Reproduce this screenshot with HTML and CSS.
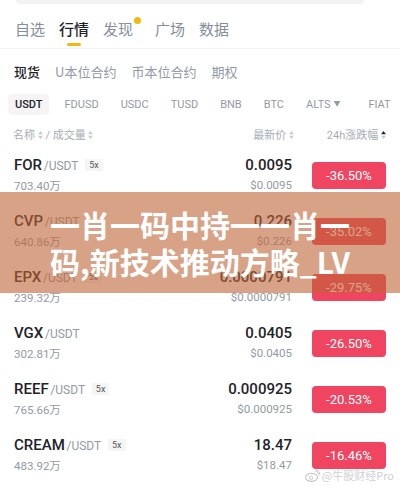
FILE: index.html
```html
<!DOCTYPE html>
<html lang="zh-CN">
<head>
    <meta charset="UTF-8">
    <meta name="viewport" content="width=device-width, initial-scale=1.0">
    <title>行情</title>
    <link rel="stylesheet" href="styles.css">
</head>
<body>
    <div class="page">
        <div class="search"></div>

        <div class="tabs">
            <span class="tab">自选</span>
            <span class="tab active">行情</span>
            <span class="tab dot">发现</span>
            <span class="tab">广场</span>
            <span class="tab">数据</span>
        </div>

        <div class="subtabs">
            <span class="subtab active">现货</span>
            <span class="subtab">U本位合约</span>
            <span class="subtab">币本位合约</span>
            <span class="subtab">期权</span>
        </div>

        <div class="quotes">
            <span class="quote active">USDT</span>
            <span class="quote">FDUSD</span>
            <span class="quote">USDC</span>
            <span class="quote">TUSD</span>
            <span class="quote">BNB</span>
            <span class="quote">BTC</span>
            <span class="quote">ALTS <i class="caret">&#9660;</i></span>
            <span class="quote">FIAT</span>
        </div>

        <div class="head">
            <div class="head-name">名称 <svg class="sort" viewBox="0 0 6 10"><path d="M3 0L6 4H0z"/><path d="M3 10L0 6h6z"/></svg> / 成交量 <svg class="sort" viewBox="0 0 6 10"><path d="M3 0L6 4H0z"/><path d="M3 10L0 6h6z"/></svg></div>
            <div class="head-price">最新价 <svg class="sort" viewBox="0 0 6 10"><path d="M3 0L6 4H0z"/><path d="M3 10L0 6h6z"/></svg></div>
            <div class="head-change">24h涨跌幅 <svg class="sort on" viewBox="0 0 6 10"><path class="up" d="M3 0L6 4H0z"/><path d="M3 10L0 6h6z"/></svg></div>
        </div>

        <div class="list">
            <div class="row">
                <div class="pair">
                    <div class="sym">FOR <span class="quote-sym">/USDT</span> <span class="lev">5x</span></div>
                    <div class="vol">703.40万</div>
                </div>
                <div class="price">
                    <div class="last">0.0095</div>
                    <div class="usd">$0.0095</div>
                </div>
                <div class="change">-36.50%</div>
            </div>
            <div class="row">
                <div class="pair">
                    <div class="sym">CVP <span class="quote-sym">/USDT</span></div>
                    <div class="vol">640.86万</div>
                </div>
                <div class="price">
                    <div class="last">0.226</div>
                    <div class="usd">$0.226</div>
                </div>
                <div class="change">-35.02%</div>
            </div>
            <div class="row">
                <div class="pair">
                    <div class="sym">EPX <span class="quote-sym">/USDT</span> <span class="lev">5x</span></div>
                    <div class="vol">239.32万</div>
                </div>
                <div class="price">
                    <div class="last">0.0000791</div>
                    <div class="usd">$0.0000791</div>
                </div>
                <div class="change">-29.75%</div>
            </div>
            <div class="row">
                <div class="pair">
                    <div class="sym">VGX <span class="quote-sym">/USDT</span></div>
                    <div class="vol">302.81万</div>
                </div>
                <div class="price">
                    <div class="last">0.0405</div>
                    <div class="usd">$0.0405</div>
                </div>
                <div class="change">-26.50%</div>
            </div>
            <div class="row">
                <div class="pair">
                    <div class="sym">REEF <span class="quote-sym">/USDT</span> <span class="lev">5x</span></div>
                    <div class="vol">765.66万</div>
                </div>
                <div class="price">
                    <div class="last">0.000925</div>
                    <div class="usd">$0.000925</div>
                </div>
                <div class="change">-20.53%</div>
            </div>
            <div class="row">
                <div class="pair">
                    <div class="sym">CREAM <span class="quote-sym">/USDT</span> <span class="lev">5x</span></div>
                    <div class="vol">483.92万</div>
                </div>
                <div class="price">
                    <div class="last">18.47</div>
                    <div class="usd">$18.47</div>
                </div>
                <div class="change">-16.46%</div>
            </div>
        </div>

        <div class="banner">
            <p>一肖一码中持一一肖一</p>
            <p>码,新技术推动方略_LV</p>
        </div>

        <div class="mark">
            <svg class="weibo" viewBox="0 0 16 14"><ellipse cx="7" cy="9" rx="6.5" ry="4.3" fill="none" stroke="#c8c8c8" stroke-width="1.2"/><circle cx="6.5" cy="9.5" r="1.8" fill="none" stroke="#c8c8c8" stroke-width="1"/><path d="M11 2.5a3 3 0 0 1 3.5 3.5M11 0.8a4.8 4.8 0 0 1 4.6 5.4" fill="none" stroke="#c8c8c8" stroke-width="1"/></svg>
            <span>@牛股财经Pro</span>
        </div>
    </div>
</body>
</html>
```

FILE: styles.css
```css
body {
    margin: 0;
    padding: 0;
    background: #fff;
    font-family: Roboto, "Noto Sans CJK SC", sans-serif;
    color: #1e2329;
}
.page {
    position: relative;
    width: 400px;
    height: 486px;
    overflow: hidden;
}
.search {
    height: 4px;
    margin: 0 36px 0 16px;
    background-color: #f3f3f3;
    border-radius: 0 0 8px 8px;
}
.tabs {
    display: flex;
    gap: 14px;
    padding: 15px 0 9px 15px;
    border-bottom: 1px solid #f2f2f2;
}
.tab {
    position: relative;
    font-size: 15px;
    line-height: 20px;
    color: #848e9c;
    font-family: "Noto Sans CJK SC", sans-serif;
}
.tab.active {
    color: #1e2329;
    font-weight: 500;
}
.tab.active::after {
    content: "";
    position: absolute;
    left: 8px;
    bottom: -7px;
    width: 14px;
    height: 3px;
    border-radius: 2px;
    background-color: #f0b90b;
}
.tab.dot {
    margin-right: 8px;
}
.tab.dot::after {
    content: "";
    position: absolute;
    right: -8px;
    top: -2px;
    width: 7px;
    height: 7px;
    border-radius: 50%;
    background-color: #f0b90b;
}
.subtabs {
    display: flex;
    gap: 15px;
    padding: 14px 0 13px 14px;
}
.subtab {
    font-size: 13px;
    line-height: 18px;
    color: #929aa5;
    font-family: "Noto Sans CJK SC", sans-serif;
}
.subtab.active {
    color: #1e2329;
    font-weight: 500;
}
.quotes {
    display: flex;
    align-items: center;
    padding-left: 8px;
    height: 21px;
}
.quote {
    font-size: 11px;
    line-height: 21px;
    color: #929aa5;
    padding: 0 7px;
    margin-right: 8px;
    white-space: nowrap;
}
.quote.active {
    color: #1e2329;
    font-weight: 500;
    background-color: #f5f5f5;
    border-radius: 4px;
}
.quote:nth-child(7) {
    margin-right: 14px;
}
.caret {
    font-style: normal;
    font-size: 7px;
    vertical-align: 2px;
}
.head {
    display: flex;
    align-items: center;
    height: 22px;
    margin-top: 8px;
    margin-bottom: 2px;
    padding: 0 14px 0 13px;
    font-size: 11px;
    color: #a7adb5;
    font-family: Roboto, "Noto Sans CJK SC", sans-serif;
}
.head-name {
    flex: 1;
}
.head-price {
    margin-right: 30px;
}
.head-change {
    width: 62px;
    text-align: right;
    white-space: nowrap;
}
.sort {
    width: 5px;
    height: 8px;
    fill: #c7cbd1;
}
.sort.on .up {
    fill: #1e2329;
}
.row {
    display: flex;
    align-items: center;
    height: 56px;
    padding: 0 14px;
    box-sizing: border-box;
}
.pair {
    flex: 1;
    padding-bottom: 2px;
}
.sym {
    font-size: 15px;
    line-height: 20px;
    font-weight: 500;
    color: #1e2329;
}
.quote-sym {
    font-size: 12px;
    font-weight: 400;
    color: #929aa5;
    margin-left: -2px;
}
.lev {
    display: inline-block;
    font-size: 9px;
    line-height: 12px;
    font-weight: 400;
    color: #555;
    background-color: #f5f5f5;
    padding: 0 4px;
    margin-left: 3px;
    vertical-align: 2px;
}
.vol, .usd {
    font-size: 11.5px;
    line-height: 16px;
    color: #929aa5;
    margin-top: 2px;
}
.price {
    text-align: right;
    padding-bottom: 2px;
}
.last {
    font-size: 15px;
    line-height: 20px;
    font-weight: 500;
    color: #1e2329;
}
.change {
    width: 74px;
    height: 27px;
    line-height: 27px;
    margin-left: 20px;
    border-radius: 4px;
    background-color: #ef4560;
    color: #fff;
    font-size: 13px;
    text-align: center;
}
.banner {
    position: absolute;
    left: 0;
    top: 192px;
    width: 400px;
    height: 101px;
    background-color: rgba(190, 100, 55, 0.6);
    display: flex;
    flex-direction: column;
    justify-content: center;
    align-items: center;
}
.banner p {
    margin: 0;
    font-family: "Noto Sans CJK SC", sans-serif;
    font-weight: 700;
    font-size: 30px;
    line-height: 37px;
    color: #fff;
    white-space: nowrap;
}
.mark {
    position: absolute;
    right: 6px;
    bottom: 3px;
    display: flex;
    align-items: center;
    gap: 2px;
    font-family: "Noto Sans CJK SC", sans-serif;
    font-size: 11px;
    color: #d0d0d0;
}
.weibo {
    width: 15px;
    height: 13px;
}
```
